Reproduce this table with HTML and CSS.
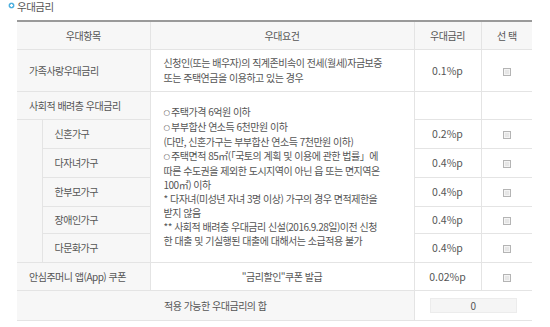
FILE: index.html
```html
<!DOCTYPE html>
<html lang="ko">
<head>
<meta charset="utf-8">
<link rel="stylesheet" href="styles.css">
</head>
<body>
<div class="page">
  <h3 class="title"><span class="dot"></span>우대금리</h3>
  <table class="rate">
    <colgroup>
      <col class="c-sub"><col class="c-name"><col class="c-cond"><col class="c-rate"><col class="c-sel">
    </colgroup>
    <thead>
      <tr class="h-head">
        <th colspan="2">우대항목</th>
        <th>우대요건</th>
        <th>우대금리</th>
        <th>선 택</th>
      </tr>
    </thead>
    <tbody>
      <tr class="h-b">
        <td colspan="2" class="name">가족사랑우대금리</td>
        <td class="cond">신청인(또는 배우자)의 직계존비속이 전세(월세)자금보증<br>또는 주택연금을 이용하고 있는 경우</td>
        <td class="num">0.1%p</td>
        <td class="sel"><span class="chk"></span></td>
      </tr>
      <tr class="h-c">
        <td colspan="2" class="name">사회적 배려층 우대금리</td>
        <td rowspan="6" class="cond big"><span class="o">○</span>주택가격 6억원 이하<br><span class="o">○</span>부부합산 연소득 6천만원 이하<br>(다만, 신혼가구는 부부합산 연소득 7천만원 이하)<br><span class="o">○</span>주택면적 85㎡(「국토의 계획 및 이용에 관한 법률」에<br>따른 수도권을 제외한 도시지역이 아닌 읍 또는 면지역은<br>100㎡) 이하<br>* 다자녀(미성년 자녀 3명 이상) 가구의 경우 면적제한을<br>받지 않음<br>** 사회적 배려층 우대금리 신설(2016.9.28일)이전 신청<br>한 대출 및 기실행된 대출에 대해서는 소급적용 불가</td>
        <td class="num"></td>
        <td class="sel"></td>
      </tr>
      <tr class="h-s">
        <td rowspan="5" class="sub"></td>
        <td class="name">신혼가구</td>
        <td class="num">0.2%p</td>
        <td class="sel"><span class="chk"></span></td>
      </tr>
      <tr class="h-s">
        <td class="name">다자녀가구</td>
        <td class="num">0.4%p</td>
        <td class="sel"><span class="chk"></span></td>
      </tr>
      <tr class="h-s">
        <td class="name">한부모가구</td>
        <td class="num">0.4%p</td>
        <td class="sel"><span class="chk"></span></td>
      </tr>
      <tr class="h-s2">
        <td class="name">장애인가구</td>
        <td class="num">0.4%p</td>
        <td class="sel"><span class="chk"></span></td>
      </tr>
      <tr class="h-s">
        <td class="name">다문화가구</td>
        <td class="num">0.4%p</td>
        <td class="sel"><span class="chk"></span></td>
      </tr>
      <tr class="h-c">
        <td colspan="2" class="name">안심주머니 앱(App) 쿠폰</td>
        <td class="center">"금리할인"쿠폰 발급</td>
        <td class="num">0.02%p</td>
        <td class="sel"><span class="chk"></span></td>
      </tr>
      <tr class="h-j">
        <td colspan="3" class="total">적용 가능한 우대금리의 합</td>
        <td colspan="2" class="sum"><span class="sumbox">0</span></td>
      </tr>
    </tbody>
  </table>
</div>
</body>
</html>
```

FILE: styles.css
```css
html, body {
  margin: 0;
  padding: 0;
  background: #fff;
}
body {
  font-family: "Noto Sans CJK KR", "Noto Sans", sans-serif;
  font-size: 10px;
  color: #555;
  letter-spacing: -0.5px;
}
.page {
  padding: 0 18px 0 17px;
}
.title {
  position: relative;
  margin: 0;
  height: 20px;
  font-size: 10.5px;
  font-weight: normal;
  line-height: 13px;
  color: #555;
}
.dot {
  position: absolute;
  left: -8px;
  top: 3px;
  width: 3px;
  height: 3px;
  border: 1px solid #2a9fd8;
  border-radius: 50%;
  background: #fff;
  box-shadow: 0 0 0 0.5px #7cc6ea;
}
.rate {
  width: 515px;
  border-collapse: collapse;
  table-layout: fixed;
  border-top: 2px solid #9a9a9a;
  border-bottom: 1px solid #e2e2e2;
}
.c-sub { width: 25px; }
.c-name { width: 108px; }
.c-cond { width: 264px; }
.c-rate { width: 67px; }
.c-sel { width: 51px; }
.rate th, .rate td {
  border: 1px solid #e4e4e4;
  padding: 0;
  vertical-align: middle;
  white-space: nowrap;
}
.rate tr > :first-child { border-left: none; }
.rate tr > :last-child { border-right: none; }
.rate th {
  background: #f7f7f7;
  font-weight: normal;
  color: #555;
  text-align: center;
}
.h-head { height: 28px; }
.h-b { height: 42px; }
.h-c { height: 28px; }
.h-s { height: 29px; }
.h-s2 { height: 27px; }
.h-j { height: 30px; }
.name, .sub {
  background: #f7f7f7;
  padding-left: 12px !important;
}
.sub { padding: 0 !important; }
.cond {
  padding-left: 13px !important;
  line-height: 15px;
}
.big { line-height: 14px; }
.o {
  font-family: "DejaVu Sans", sans-serif;
  font-size: 7.5px;
  letter-spacing: 0;
  margin-right: 1px;
  vertical-align: 1px;
}
.center { text-align: center; }
.num {
  text-align: center;
  letter-spacing: 0;
  font-size: 10.5px;
}
.sel { text-align: center; }
.chk {
  display: inline-block;
  width: 6px;
  height: 6px;
  border: 1px solid #b4b4b4;
  background: #e6e6e6;
  box-shadow: inset 0 0 0 1px #f4f4f4;
  vertical-align: middle;
}
.total {
  text-align: center;
  background: #f7f7f7;
}
.sum { text-align: center; }
.sumbox {
  display: inline-block;
  width: 85px;
  height: 13px;
  line-height: 13px;
  border: 1px solid #ececec;
  background: #f5f5f5;
  font-size: 10px;
  letter-spacing: 0;
  vertical-align: middle;
}
```
